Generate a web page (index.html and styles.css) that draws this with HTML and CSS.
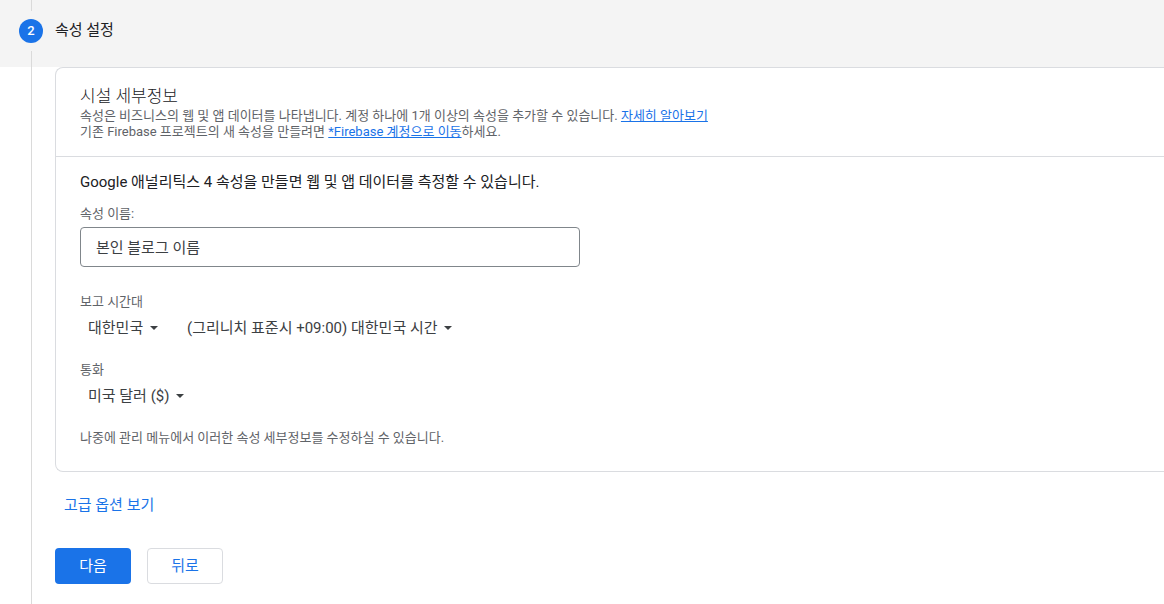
FILE: index.html
```html
<!DOCTYPE html>
<html lang="ko">
<head>
  <meta charset="UTF-8">
  <meta name="viewport" content="width=device-width, initial-scale=1.0">
  <title>속성 설정</title>
  <link rel="stylesheet" href="styles.css">
</head>
<body>

  <header class="step-header">
    <div class="step-rail">
      <span class="rail-line rail-line-top"></span>
      <span class="step-number">2</span>
      <span class="rail-line rail-line-bottom"></span>
    </div>
    <h1 class="step-title">속성 설정</h1>
  </header>

  <main class="step-body">
    <form class="property-form">
      <div class="card">
        <div class="card-header">
          <h2 class="card-title">시설 세부정보</h2>
          <p class="card-text">속성은 비즈니스의 웹 및 앱 데이터를 나타냅니다. 계정 하나에 1개 이상의 속성을 추가할 수 있습니다. <a href="#">자세히 알아보기</a></p>
          <p class="card-text">기존 Firebase 프로젝트의 새 속성을 만들려면 <a href="#">*Firebase 계정으로 이동</a>하세요.</p>
        </div>

        <div class="card-content">
          <p class="intro">Google 애널리틱스 4 속성을 만들면 웹 및 앱 데이터를 측정할 수 있습니다.</p>

          <div class="field name-field">
            <label class="field-label" for="property-name">속성 이름:</label>
            <input class="text-input" type="text" id="property-name" value="본인 블로그 이름">
          </div>

          <div class="field">
            <label class="field-label" for="country">보고 시간대</label>
            <div class="select-row">
              <span class="select">
                <select id="country">
                  <option>대한민국</option>
                </select>
              </span>
              <span class="select">
                <select id="timezone" aria-label="시간대">
                  <option>(그리니치 표준시 +09:00) 대한민국 시간</option>
                </select>
              </span>
            </div>
          </div>

          <div class="field">
            <label class="field-label" for="currency">통화</label>
            <div class="select-row">
              <span class="select">
                <select id="currency">
                  <option>미국 달러 ($)</option>
                </select>
              </span>
            </div>
          </div>

          <p class="card-text">나중에 관리 메뉴에서 이러한 속성 세부정보를 수정하실 수 있습니다.</p>
        </div>
      </div>

      <button class="btn btn-text" type="button">고급 옵션 보기</button>

      <div class="actions">
        <button class="btn btn-primary" type="submit">다음</button>
        <button class="btn btn-outline" type="button">뒤로</button>
      </div>
    </form>
  </main>

</body>
</html>
```
FILE: styles.css
```css
* {
  box-sizing: border-box;
}

html, body {
  height: 100%;
}

body {
  display: flex;
  flex-direction: column;
  margin: 0;
  font-family: Roboto, "Noto Sans CJK KR", sans-serif;
  font-size: 15px;
  line-height: 20px;
  color: #202124;
  background-color: #fff;
}

h1, h2, p {
  margin: 0;
  font-weight: 400;
}

a {
  color: #1a73e8;
}

input, select, button {
  font: inherit;
}

/* Step header */
.step-header {
  display: flex;
  background-color: #f4f4f4;
}

.step-rail {
  display: flex;
  flex-direction: column;
  align-items: center;
  gap: 8px;
  margin-left: 19px;
}

.rail-line {
  width: 1px;
  background-color: #dadada;
}

.rail-line-top {
  height: 11px;
}

.rail-line-bottom {
  height: 16px;
}

.step-number {
  width: 24px;
  height: 24px;
  border-radius: 50%;
  background-color: #1a73e8;
  color: #fff;
  font-size: 13px;
  font-weight: 500;
  line-height: 24px;
  text-align: center;
}

.step-title {
  padding: 20px 12px;
  font-size: 15px;
}

/* Step content, with the rail running down its left side */
.step-body {
  flex: 1 0 auto;
  margin-left: 31px;
  padding: 0 0 20px 23px;
  border-left: 1px solid #dadada;
}

.card {
  border: 1px solid #dadce0;
  border-right: 0;
  border-radius: 8px 0 0 8px;
}

.card-header {
  padding: 16px 24px;
  border-bottom: 1px solid #dadce0;
}

.card-title {
  font-size: 17px;
  font-weight: 300;
  line-height: 24px;
}

.card-text {
  font-size: 13px;
  line-height: 16px;
  color: #5f6368;
}

.card-content {
  display: flex;
  flex-direction: column;
  gap: 16px;
  padding: 15px 24px 25px;
}

.intro {
  margin-bottom: -2px;
}

.field {
  display: flex;
  flex-direction: column;
}

.name-field {
  gap: 5px;
  margin-bottom: 11px;
}

.field-label {
  font-size: 13px;
  line-height: 16px;
  color: #5f6368;
}

.text-input {
  width: 100%;
  max-width: 500px;
  height: 40px;
  padding: 0 15px 2px;
  border: 1px solid #80868b;
  border-radius: 4px;
  color: #3c4043;
}

.select-row {
  display: flex;
  gap: 13px;
}

.select {
  display: flex;
  align-items: center;
  padding: 0 8px;
  gap: 6px;
}

.select select {
  height: 36px;
  padding: 0;
  border: 0;
  appearance: none;
  background: none;
  color: #3c4043;
}

.select::after {
  content: "";
  border: 4px solid transparent;
  border-top-color: #3c4043;
  border-bottom: 0;
}

/* Buttons */
.btn {
  min-width: 76px;
  height: 36px;
  padding: 0 23px;
  border: 1px solid transparent;
  border-radius: 4px;
  background: none;
  color: #1a73e8;
  cursor: pointer;
}

.btn-text {
  margin-top: 15px;
  padding: 0 8px;
}

.btn-primary {
  background-color: #1a73e8;
  color: #fff;
}

.btn-outline {
  border-color: #dadce0;
}

.actions {
  display: flex;
  gap: 16px;
  margin-top: 25px;
}
```
